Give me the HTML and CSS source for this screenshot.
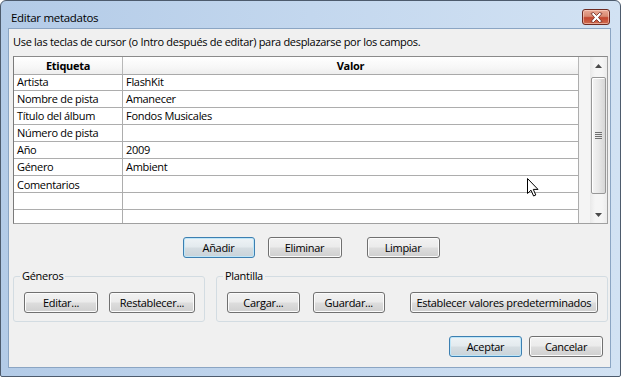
FILE: index.html
```html
<!DOCTYPE html>
<html lang="es">
<head>
<meta charset="utf-8">
<title>Editar metadatos</title>
<link rel="stylesheet" href="styles.css">
</head>
<body>
<div class="window">
  <div class="titlebar">
    <span class="title">Editar metadatos</span>
    <div class="close">
      <svg width="13" height="11" viewBox="0 0 13 11"><path d="M1 1.5 L3.5 0.5 L6.5 3.5 L9.5 0.5 L12 1.5 L8.5 5.5 L12 9.5 L9.5 10.5 L6.5 7.5 L3.5 10.5 L1 9.5 L4.5 5.5 Z" fill="#fff" stroke="#6b2219" stroke-width="0.8" stroke-linejoin="round"/></svg>
    </div>
  </div>
  <div class="client">
    <p class="hint">Use las teclas de cursor (o Intro después de editar) para desplazarse por los campos.</p>
    <div class="list">
      <div class="grid">
        <div class="hcell">Etiqueta</div><div class="hcell">Valor</div>
        <div class="cell">Artista</div><div class="cell">FlashKit</div>
        <div class="cell">Nombre de pista</div><div class="cell">Amanecer</div>
        <div class="cell">Título del álbum</div><div class="cell">Fondos Musicales</div>
        <div class="cell">Número de pista</div><div class="cell"></div>
        <div class="cell">Año</div><div class="cell">2009</div>
        <div class="cell">Género</div><div class="cell">Ambient</div>
        <div class="cell"><span class="clip">Comentarios</span></div><div class="cell"></div>
        <div class="cell"></div><div class="cell"></div>
        <div class="cell"></div><div class="cell"></div>
      </div>
      <div class="filler"></div>
      <div class="vscroll">
        <div class="arrow">
          <svg width="7" height="4" viewBox="0 0 7 4"><path d="M0 4 L3.5 0 L7 4 Z" fill="#4a4a4a"/></svg>
        </div>
        <div class="track">
          <div class="thumb">
            <svg width="7" height="7" viewBox="0 0 7 7"><path d="M0 0.5 H7 M0 2.5 H7 M0 4.5 H7 M0 6.5 H7" stroke="#6f6f6f" stroke-width="1"/></svg>
          </div>
        </div>
        <div class="arrow">
          <svg width="7" height="4" viewBox="0 0 7 4"><path d="M0 0 L7 0 L3.5 4 Z" fill="#4a4a4a"/></svg>
        </div>
      </div>
    </div>
    <div class="actions">
      <button class="btn default w-anadir">Añadir</button>
      <button class="btn w-eliminar">Eliminar</button>
      <button class="btn w-limpiar">Limpiar</button>
    </div>
    <div class="groups">
      <fieldset class="group generos">
        <legend>Géneros</legend>
        <div class="group-row">
          <button class="btn w-editar">Editar...</button>
          <button class="btn w-restablecer">Restablecer...</button>
        </div>
      </fieldset>
      <fieldset class="group plantilla">
        <legend>Plantilla</legend>
        <div class="group-row">
          <button class="btn w-cargar">Cargar...</button>
          <button class="btn w-guardar">Guardar...</button>
          <button class="btn w-establecer">Establecer valores predeterminados</button>
        </div>
      </fieldset>
    </div>
    <div class="footer">
      <button class="btn default w-aceptar">Aceptar</button>
      <button class="btn w-cancelar">Cancelar</button>
    </div>
  </div>
  <svg class="cursor" width="12" height="19" viewBox="0 0 12 19"><path d="M0.5 0.5 L0.5 15.5 L4 12.2 L6.6 18 L8.8 17 L6.3 11.4 L11 11.4 Z" fill="#fff" stroke="#000" stroke-width="1" stroke-linejoin="miter"/></svg>
</div>
</body>
</html>
```

FILE: styles.css
```css
* { box-sizing: border-box; }

body {
  margin: 0;
  background: #ffffff;
  font-family: "Open Sans", "Noto Sans", sans-serif;
  font-size: 11px;
  letter-spacing: -0.3px;
  color: #000;
}

.window {
  position: relative;
  width: 621px;
  height: 377px;
  border: 1px solid #4d5b6d;
  border-radius: 6px 6px 2px 2px;
  background: linear-gradient(to right, #b3cbe7 0%, #c3d7ee 50%, #d2e2f3 100%);
  display: flex;
  flex-direction: column;
  padding: 0 9px 8px 7px;
  overflow: hidden;
}

.titlebar {
  height: 27px;
  flex: none;
  display: flex;
  justify-content: space-between;
  align-items: flex-start;
}

.title {
  padding: 9px 0 0 3px;
  line-height: 16px;
  font-size: 11.5px;
}

.close {
  margin-top: 8px;
  margin-right: 1px;
  width: 28px;
  height: 16px;
  border: 1px solid #6e2b22;
  border-radius: 3px;
  background: linear-gradient(#eaa995 0%, #d88a73 45%, #c3462f 55%, #cf6c4f 100%);
  box-shadow: inset 0 0 0 1px rgba(255, 220, 210, 0.55);
  display: flex;
  align-items: center;
  justify-content: center;
}

.client {
  flex: 1;
  background: #f0f0f0;
  border: 1px solid #8ba5c3;
  padding: 5px 2px 9px 4px;
  display: flex;
  flex-direction: column;
}

.hint {
  margin: 0;
  line-height: 16px;
  padding-left: 0;
}

.list {
  margin-top: 6px;
  height: 168px;
  flex: none;
  display: flex;
  border: 1px solid #a0a0a0;
  border-left-color: #7a7a7a;
  border-top-color: #8a8a8a;
  background: #f4f4f4;
  overflow: hidden;
}

.grid {
  width: 565px;
  flex: none;
  display: grid;
  grid-template-columns: 109px 456px;
  grid-auto-rows: 17px;
  align-content: start;
  background: #ffffff;
}

.hcell {
  height: 18px;
  font-weight: bold;
  text-align: center;
  line-height: 17px;
  background: linear-gradient(#ffffff 0%, #f7f7f7 60%, #eeeeee 100%);
  border-bottom: 1px solid #a9a9a9;
  border-right: 1px solid #b8b8b8;
}

.cell {
  height: 17px;
  line-height: 16px;
  padding-left: 3px;
  border-bottom: 1px solid #adadad;
  border-right: 1px solid #adadad;
  white-space: nowrap;
  overflow: hidden;
}

.clip {
  display: block;
  height: 13px;
  overflow: hidden;
  line-height: 17px;
}

.filler {
  flex: 1;
  background: #f4f4f4;
}

.vscroll {
  width: 17px;
  flex: none;
  display: flex;
  flex-direction: column;
  background: linear-gradient(to right, #e9e9e9 0%, #f5f5f5 30%, #f5f5f5 70%, #ececec 100%);
}

.arrow {
  height: 17px;
  flex: none;
  display: flex;
  align-items: center;
  justify-content: center;
}

.track {
  flex: 1;
  padding: 3px 1px 12px 1px;
  display: flex;
}

.thumb {
  flex: 1;
  border: 1px solid #979797;
  border-radius: 2px;
  background: linear-gradient(to right, #f4f4f4 0%, #e8e8e8 50%, #d6d6d6 100%);
  box-shadow: inset 1px 1px 0 #ffffff;
  display: flex;
  align-items: center;
  justify-content: center;
}

.actions {
  margin-top: 13px;
  display: flex;
  justify-content: center;
  padding-left: 1px;
}

.btn {
  height: 21px;
  padding: 0;
  border: 1px solid #707070;
  border-radius: 3px;
  background: linear-gradient(#f2f2f2 0%, #ebebeb 48%, #dddddd 52%, #cfcfcf 100%);
  box-shadow: inset 0 0 0 1px #fbfbfb;
  font-family: "Open Sans", "Noto Sans", sans-serif;
  font-size: 11px;
  letter-spacing: -0.3px;
  color: #000;
  line-height: 17px;
}

.btn.default {
  border-color: #3c7fb1;
  box-shadow: inset 0 0 0 1px #bfe6f8;
  background: linear-gradient(#eef3f6 0%, #e3eaee 48%, #d5dde2 52%, #c9d3d9 100%);
}

.w-anadir { width: 72px; }
.w-eliminar { width: 74px; margin-left: 13px; }
.w-limpiar { width: 73px; margin-left: 25px; }

.groups {
  margin-top: 10px;
  display: flex;
  gap: 11px;
}

.group {
  margin: 0;
  padding: 8px 9px 8px 10px;
  border: 1px solid #d3dce2;
  border-radius: 3px;
  min-width: 0;
}

.generos { width: 192px; flex: none; }
.plantilla { flex: 1; }

.group legend {
  padding: 0 2px;
  margin-left: -4px;
  line-height: 16px;
}

.group-row {
  display: flex;
}

.w-editar { width: 74px; }
.w-restablecer { width: 86px; margin-left: 11px; }
.w-cargar { width: 73px; }
.w-guardar { width: 72px; margin-left: 13px; }
.w-establecer { width: 189px; margin-left: 25px; }

.footer {
  margin-top: 14px;
  display: flex;
  justify-content: flex-end;
  padding-right: 5px;
}

.w-aceptar { width: 73px; }
.w-cancelar { width: 74px; margin-left: 7px; }

.cursor {
  position: absolute;
  left: 526px;
  top: 177px;
}
```
